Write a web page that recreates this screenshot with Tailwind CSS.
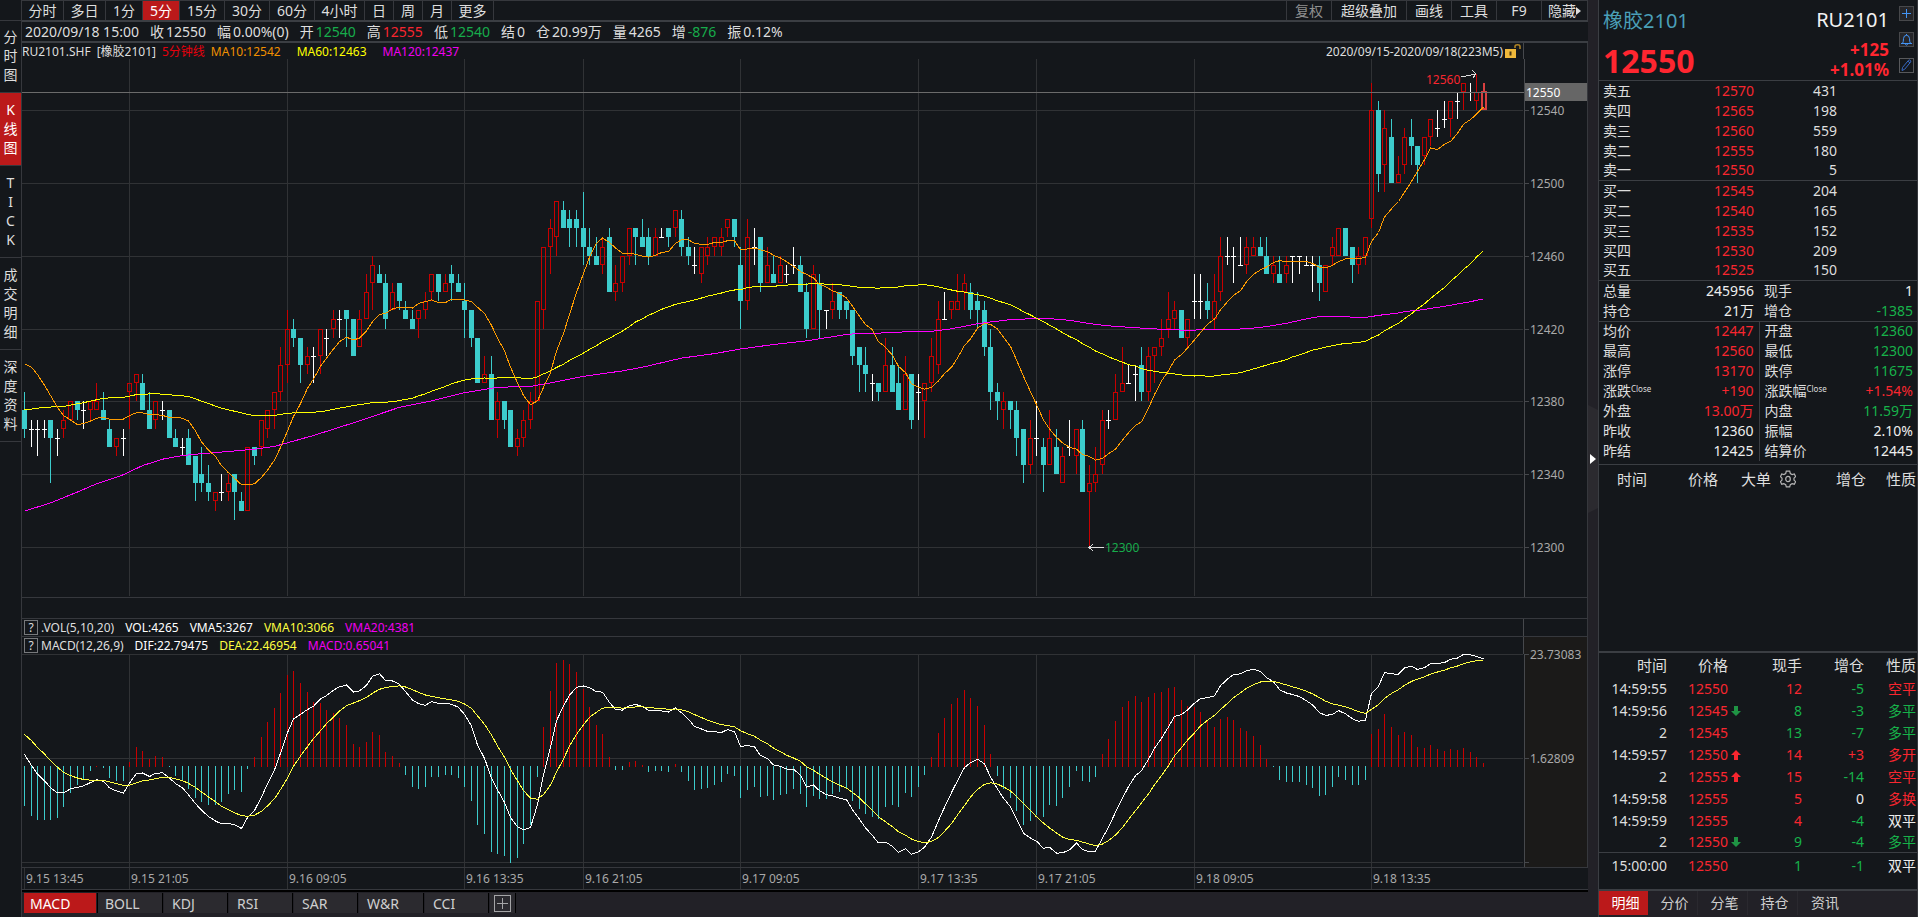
<!DOCTYPE html>
<html lang="zh-CN">
<head>
<meta charset="utf-8">
<title>橡胶2101 RU2101</title>
<script src="https://cdn.jsdelivr.net/npm/@tailwindcss/browser@4"></script>
</head>
<body class="flex h-screen overflow-hidden bg-[#14171b] font-['Noto_Sans','Noto_Sans_CJK_SC',sans-serif] text-sm leading-5 text-[#dedede]">

<!-- view switcher -->
<nav class="flex w-[22px] shrink-0 flex-col border-r border-[#36383d] text-center text-sm leading-[19px]" aria-label="视图">
  <div class="h-[21px] border-b border-[#36383d]"></div>
  <button class="border-b border-[#36383d] px-[3px] pt-[6px] pb-2 break-all">分时图</button>
  <button class="border-b border-[#36383d] bg-[#bb191a] px-[3px] pt-[7px] pb-2 break-all text-white">K线图</button>
  <button class="flex flex-col items-center border-b border-[#36383d] pt-[7px] pb-2"><span>T</span><span>I</span><span>C</span><span>K</span></button>
  <button class="border-b border-[#36383d] px-[3px] pt-[7px] pb-2 break-all">成交明细</button>
  <button class="border-b border-[#36383d] px-[3px] pt-[7px] pb-2 break-all">深度资料</button>
</nav>

<main class="flex min-w-0 flex-1 flex-col">
  <!-- period toolbar -->
  <div class="flex h-[22px] shrink-0 border-t border-b-2 border-t-[#36383d] border-b-[#3b3e43] leading-[19px] whitespace-nowrap">
    <button class="w-[42px] border-r border-[#36383d]">分时</button>
    <button class="w-[42px] border-r border-[#36383d]">多日</button>
    <button class="w-[37px] border-r border-[#36383d]">1分</button>
    <button class="w-[37px] border-r border-[#36383d] bg-[#bb191a] text-white">5分</button>
    <button class="w-[45px] border-r border-[#36383d]">15分</button>
    <button class="w-[45px] border-r border-[#36383d]">30分</button>
    <button class="w-[45px] border-r border-[#36383d]">60分</button>
    <button class="w-[50px] border-r border-[#36383d]">4小时</button>
    <button class="w-[29px] border-r border-[#36383d]">日</button>
    <button class="w-[29px] border-r border-[#36383d]">周</button>
    <button class="w-[29px] border-r border-[#36383d]">月</button>
    <button class="w-[42px] border-r border-[#36383d]">更多</button>
    <div class="flex-1"></div>
    <button class="w-[46px] border-x border-[#36383d] text-[#8f8f8f]">复权</button>
    <button class="w-[75px] border-r border-[#36383d]">超级叠加</button>
    <button class="w-[45px] border-r border-[#36383d]">画线</button>
    <button class="w-[45px] border-r border-[#36383d]">工具</button>
    <button class="w-[45px] border-r border-[#36383d]">F9</button>
    <button class="flex w-[46px] items-center justify-center border-r border-[#36383d]">隐藏<svg class="h-2 w-[5px]" viewBox="0 0 5 8"><path d="M0 0L5 4L0 8Z" fill="#dedede"/></svg></button>
  </div>

  <!-- bar quote line -->
  <div class="flex h-[21px] shrink-0 items-center gap-[11px] border-b-2 border-[#3b3e43] pl-[3px] whitespace-nowrap">
    <span>2020/09/18 15:00</span>
    <span class="flex gap-0.5">收<b class="font-normal">12550</b></span>
    <span class="flex gap-0.5">幅<b class="font-normal">0.00%(0)</b></span>
    <span class="flex gap-0.5">开<b class="font-normal text-[#17ac4b]">12540</b></span>
    <span class="flex gap-0.5">高<b class="font-normal text-[#f8262f]">12555</b></span>
    <span class="flex gap-0.5">低<b class="font-normal text-[#17ac4b]">12540</b></span>
    <span class="flex gap-0.5">结<b class="font-normal">0</b></span>
    <span class="flex gap-0.5">仓<b class="font-normal">20.99万</b></span>
    <span class="flex gap-0.5">量<b class="font-normal">4265</b></span>
    <span class="flex gap-0.5">增<b class="font-normal text-[#17ac4b]">-876</b></span>
    <span class="flex gap-0.5">振<b class="font-normal">0.12%</b></span>
  </div>

  <!-- main chart legend -->
  <div class="flex h-4 shrink-0 border-r border-[#36383d] text-xs leading-[18px] whitespace-nowrap">
    <div class="flex flex-1 border-r border-[#46484c]">
      <span>RU2101.SHF</span>
      <span class="ml-[6px]">[橡胶2101]</span>
      <span class="ml-[6px] text-[#e6000c]">5分钟线</span>
      <span class="ml-[6px] text-[#f09000]">MA10:12542</span>
      <span class="ml-4 text-[#ffff00]">MA60:12463</span>
      <span class="ml-4 text-[#f000f0]">MA120:12437</span>
      <span class="ml-auto">2020/09/15-2020/09/18(223M5)</span>
      <svg class="mt-px mr-0.5 ml-0.5 h-[15px] w-4" viewBox="0 0 16 15"><path d="M0 5h11v9H0z" fill="#efb83b"/><path d="M4.500 7.500h2v4h-2z" fill="#4a3814"/><path d="M10 4V2.500Q10 .8 12.500 .8T15 2.500V5" fill="none" stroke="#b08424" stroke-width="1.500"/></svg>
    </div>
    <div class="w-[63px]"></div>
  </div>
  <div class="relative min-h-0 flex-[538] border-r border-b border-[#36383d]"><svg id="price" class="absolute inset-0 h-full w-full" role="img" aria-label="5分钟K线"></svg></div>
  <div class="h-[21px] shrink-0 border-r border-b border-[#36383d]"></div>

  <!-- indicator legends -->
  <div class="flex h-[18px] shrink-0 border-r border-b border-[#36383d] text-xs leading-[18px] whitespace-nowrap">
    <div class="flex flex-1 gap-[11px] border-r border-[#46484c] pl-0.5">
      <span class="flex gap-[3px]"><button class="mt-px h-[15px] w-[14px] border border-[#77797c] text-xs leading-[13px]">?</button>.VOL(5,10,20)</span>
      <span class="text-white">VOL:4265</span><span class="text-white">VMA5:3267</span><span class="text-[#ffff40]">VMA10:3066</span><span class="text-[#f000f0]">VMA20:4381</span>
    </div>
    <div class="w-[63px]"></div>
  </div>
  <div class="flex h-[17px] shrink-0 border-r border-[#36383d] text-xs leading-[18px] whitespace-nowrap">
    <div class="flex flex-1 gap-[11px] border-r border-[#46484c] pl-0.5">
      <span class="flex gap-[3px]"><button class="mt-px h-[15px] w-[14px] border border-[#77797c] text-xs leading-[13px]">?</button>MACD(12,26,9)</span>
      <span class="text-white">DIF:22.79475</span><span class="text-[#ffff40]">DEA:22.46954</span><span class="text-[#f000f0]">MACD:0.65041</span>
    </div>
    <div class="w-[63px] bg-[#1b1a19]"></div>
  </div>
  <div class="relative min-h-0 flex-[213] border-r border-b border-[#36383d]"><svg id="macd" class="absolute inset-0 h-full w-full overflow-visible" role="img" aria-label="MACD"></svg></div>
  <div class="relative h-[22px] shrink-0 border-b border-[#36383d]"><svg id="times" class="absolute inset-0 h-full w-full" role="img" aria-label="时间轴"></svg></div>

  <!-- indicator tabs -->
  <div class="flex h-[27px] shrink-0 gap-px border-t-2 border-black bg-[#222127] pt-px pb-1 pl-0.5 leading-[21px] text-[#cfcfcf]">
    <button class="w-[72px] bg-[#bb191a] pl-[6px] text-left text-white">MACD</button>
    <button class="w-[66px] border-x border-black bg-[#2b2a2f] pl-[7px] text-left">BOLL</button>
    <button class="w-[64px] border-r border-black bg-[#2b2a2f] pl-2 text-left">KDJ</button>
    <button class="w-[64px] border-r border-black bg-[#2b2a2f] pl-2 text-left">RSI</button>
    <button class="w-[64px] border-r border-black bg-[#2b2a2f] pl-2 text-left">SAR</button>
    <button class="w-[65px] border-r border-black bg-[#2b2a2f] pl-2 text-left">W&amp;R</button>
    <button class="w-[64px] border-r border-black bg-[#2b2a2f] pl-2 text-left">CCI</button>
    <button class="flex w-[26px] items-center justify-center border-r border-black bg-[#2b2a2f]" aria-label="添加指标"><svg class="h-[17px] w-[17px]" viewBox="0 0 17 17" fill="none" stroke="#a5a5a7" shape-rendering="crispEdges"><path d="M.5.5h16v16H.5zM3 8.500h11M8.500 3v11"/></svg></button>
  </div>
</main>

<!-- panel collapse handle -->
<button class="flex w-[11px] shrink-0 items-center border-r border-[#3b3e43] bg-[#222127]" aria-label="收起"><svg class="h-[108px] w-[10px]" viewBox="0 0 10 108"><path d="M0 0L10 5V103L0 108Z" fill="#2b2a2f"/><path d="M2 49L8 54L2 59Z" fill="#fff"/></svg></button>

<aside class="flex w-[319px] shrink-0 flex-col border-r border-[#36383d]">
  <header class="flex h-20 shrink-0 justify-between pr-[3px] pl-1">
    <div>
      <h1 class="pt-[7px] text-xl leading-7 text-[#4a9fb8]">橡胶2101</h1>
      <p class="text-[32px] leading-[52px] font-bold text-[#ff2630]">12550</p>
    </div>
    <div class="flex gap-[10px]">
      <div class="text-right">
        <p class="pt-[6px] text-xl leading-7 text-[#f2f2f2]">RU2101</p>
        <p class="mt-[6px] text-[17px] leading-5 font-bold text-[#ff2630]">+125</p>
        <p class="text-[17px] leading-5 font-bold text-[#ff2630]">+1.01%</p>
      </div>
      <div class="flex flex-col gap-[11px] pt-[6px]">
        <button class="h-[15px] w-[15px] border border-[#47484b] bg-[#26262a]" aria-label="添加自选"><svg class="h-[13px] w-[13px]" viewBox="0 0 13 13" stroke="#4394f5" stroke-width="1" shape-rendering="crispEdges"><path d="M2 6.500h9M6.500 2v9"/></svg></button>
        <button class="h-[15px] w-[15px] border border-[#47484b] bg-[#26262a]" aria-label="预警"><svg class="h-[13px] w-[13px]" viewBox="0 0 13 13" fill="none" stroke="#4394f5"><path d="M1 10.500h11M2.500 10.500Q3.500 9 3.500 5.500Q3.800 2.300 6.500 2.300T9.500 5.500Q9.500 9 10.500 10.500M6.500 2.300V1M5.200 11.200Q6.500 13 7.800 11.200"/></svg></button>
        <button class="h-[15px] w-[15px] border border-[#58595c]" aria-label="画线下单"><svg class="h-[13px] w-[13px]" viewBox="0 0 13 13" fill="none" stroke="#3769c4"><path d="M2 11.500L2.500 8.500L8.500 1.300Q9.500.6 10.300 1.300Q11.300 2 10.500 3.200L4.600 10.300ZM8 2.200L10 4"/></svg></button>
      </div>
    </div>
  </header>

  <table class="w-full shrink-0 table-fixed border-collapse border-t border-[#3b3e43] text-right leading-[18px]">
    <colgroup><col class="w-[52px]"><col class="w-[103px]"><col class="w-[83px]"><col></colgroup>
    <tbody id="book"></tbody>
  </table>

  <table class="w-full shrink-0 table-fixed border-collapse text-right leading-[18px]">
    <colgroup><col class="w-[68px]"><col class="w-[92px]"><col class="w-[76px]"><col></colgroup>
    <tbody id="stats"></tbody>
  </table>

  <!-- large order columns -->
  <div class="mt-[3px] flex h-7 shrink-0 items-center border-t border-[#3b3e43] text-[15px]">
    <span class="w-12 text-right">时间</span><span class="w-[71px] text-right">价格</span><span class="w-[53px] text-right">大单</span>
    <button class="ml-[9px]" aria-label="设置"><svg class="block h-[18px] w-4" viewBox="0 0 16 18" fill="none" stroke="#b5b5b5" stroke-width="1.200"><path d="M6.300 1.200h3.400l.6 2.300 1.800 1 2.200-.6 1.300 2.700-1.600 1.600v1.900l1.600 1.600-1.300 2.500-2.200-.5-1.800 1-.6 2.200H6.300l-.6-2.200-1.800-1-2.200.5L.5 11.700l1.500-1.600V8.200L.5 6.600 1.700 3.900l2.200.6 1.800-1z"/><ellipse cx="8" cy="9" rx="2.300" ry="2.700"/></svg></button>
    <span class="ml-auto">增仓</span><span class="mr-px ml-5">性质</span>
  </div>
  <div class="min-h-0 flex-1"></div>

  <table class="w-full shrink-0 table-fixed border-collapse border-t-2 border-[#3b3e43] text-right">
    <colgroup><col class="w-[68px]"><col class="w-[61px]"><col class="w-4"><col class="w-[58px]"><col class="w-[62px]"><col></colgroup>
    <thead><tr class="h-[26px] text-[15px]"><th class="font-normal">时间</th><th class="font-normal">价格</th><th></th><th class="font-normal">现手</th><th class="font-normal">增仓</th><th class="pr-px font-normal">性质</th></tr></thead>
    <tbody id="ticks"></tbody>
  </table>
  <div class="mt-[9px] flex h-[28px] shrink-0 border-t-2 border-[#3b3e43] bg-[#222127] pb-0.5 leading-6 text-[#cfcfcf]">
    <button class="w-[49px] bg-[#bb191a] pl-1 text-white">明细</button>
    <button class="w-[50px] border-r border-[#2a292f] pl-1">分价</button>
    <button class="w-[50px] border-r border-[#2a292f] pl-1">分笔</button>
    <button class="w-[50px] border-r border-[#2a292f] pl-1">持仓</button>
    <button class="w-[50px] pl-1">资讯</button>
  </div>
</aside>

<script>
const RED = 'text-[#f8262f]', GREEN = 'text-[#17b24a]', WHITE = 'text-[#eeeeee]';
const tone = { r: RED, g: GREEN, w: WHITE };

// order book
const book = [['卖五',12570,431],['卖四',12565,198],['卖三',12560,559],['卖二',12555,180],['卖一',12550,5],['买一',12545,204],['买二',12540,165],['买三',12535,152],['买四',12530,209],['买五',12525,150]];
document.getElementById('book').innerHTML = book.map((b, i) =>
  `<tr class="h-5 ${i % 5 === 4 ? 'border-b border-[#3b3e43]' : ''}"><th scope="row" class="pl-1 text-left font-normal">${b[0]}</th><td class="${RED}">${b[1]}</td><td>${b[2]}</td><td></td></tr>`).join('');

// session statistics
const close = '<sup class="relative -top-1 align-baseline text-[8px] leading-none">Close</sup>';
const stats = [['总量','245956','w','现手','1','w'],['持仓','21万','w','增仓','-1385','g'],['均价','12447','r','开盘','12360','g'],['最高','12560','r','最低','12300','g'],['涨停','13170','r','跌停','11675','g'],['涨跌'+close,'+190','r','涨跌幅'+close,'+1.54%','r'],['外盘','13.00万','r','内盘','11.59万','g'],['昨收','12360','w','振幅','2.10%','w'],['昨结','12425','w','结算价','12445','w']];
document.getElementById('stats').innerHTML = stats.map((s, i) =>
  `<tr class="h-5 whitespace-nowrap ${i === 1 ? 'border-b border-[#3b3e43]' : ''}"><th scope="row" class="pl-1 text-left font-normal">${s[0]}</th><td class="pr-[5px] ${i > 1 ? 'border-r border-[#3b3e43]' : ''} ${tone[s[2]]}">${s[1]}</td><th scope="row" class="pl-[5px] text-left font-normal">${s[3]}</th><td class="pr-1 ${tone[s[5]]}">${s[4]}</td></tr>`).join('');

// time and sales
const up = '<svg class="mx-auto h-3 w-[10px]" viewBox="0 0 10 12"><path d="M5 1L10 6H7V11H3V6H0Z" fill="#f8262f"/></svg>';
const down = '<svg class="mx-auto h-3 w-[10px]" viewBox="0 0 10 12"><path d="M5 11L0 6H3V1H7V6H10Z" fill="#1f9444"/></svg>';
const ticks = [['14:59:55',12550,'',12,'r','-5','g','空平','r'],['14:59:56',12545,down,8,'g','-3','g','多平','g'],['2',12545,'',13,'g','-7','g','多平','g'],['14:59:57',12550,up,14,'r','+3','r','多开','r'],['2',12555,up,15,'r','-14','g','空平','r'],['14:59:58',12555,'',5,'r','0','w','多换','r'],['14:59:59',12555,'',4,'r','-4','g','双平','w'],['2',12550,down,9,'g','-4','g','多平','g'],['15:00:00',12550,'',1,'g','-1','g','双平','w']];
document.getElementById('ticks').innerHTML = ticks.map((t, i) =>
  `<tr class="${i === 7 ? 'h-5 border-b border-[#3b3e43]' : i === 8 ? 'h-7' : 'h-[22px]'}"><td>${t[0]}</td><td class="${RED}">${t[1]}</td><td>${t[2]}</td><td class="${tone[t[4]]}">${t[3]}</td><td class="${tone[t[6]]}">${t[5]}</td><td class="pr-px ${tone[t[8]]}">${t[7]}</td></tr>`).join('');

// 5-minute bars in ticks of 5 above 12300: colour, body top, body bottom, high, low
const raw = `c15,13,17,12 w13,13,14,11 w13,13,14,10 w13,13,14,12 c14,12,14,7 w12,12,13,10 r14,13,15,12 r16,14,16,14 c16,15,16,14 w15,15,16,13
r16,15,16,14 r16,15,18,15 c15,14,17,14 c13,11,14,11 r12,11,12,10 w12,12,13,10 r18,17,18,13 r19,18,19,16 c18,15,19,15 c15,13,17,13
r16,14,16,13 w15,15,16,14 c15,12,15,12 c12,11,13,11 w11,11,12,10 c12,9,13,9 c10,7,10,5 c8,7,11,6 c7,6,9,5 r6,5,6,4
w6,6,8,5 r7,6,8,5 c8,6,8,3 c5,4,6,4 r11,4,11,4 c11,10,11,9 r14,11,14,10 r15,13,15,12 r17,15,17,13 r20,17,22,16
r24,20,26,18 c24,23,25,22 c23,20,23,18 r21,20,22,19 w21,21,22,18 r24,21,24,19 w23,23,24,21 r25,24,26,23 w25,25,26,23 c26,25,26,22
c25,21,25,21 r25,22,26,22 r28,25,30,25 r31,29,32,26 c30,29,31,29 c29,25,30,24 r28,26,29,26 c29,27,29,26 c26,25,27,25 c25,24,26,24
r26,25,26,23 r27,26,28,25 r30,28,30,27 c30,28,30,27 r29,28,30,28 c30,29,31,27 c29,28,30,28 c27,26,29,23 c26,23,26,22 c23,18,23,18
r19,18,21,18 c19,14,21,14 r16,14,17,12 c16,14,16,13 c15,11,15,11 r12,11,13,10 r14,12,15,11 r16,14,17,13 r27,16,27,16 r33,26,33,24
r35,33,36,30 r38,34,38,32 c37,35,38,35 c36,35,37,33 c36,35,37,33 c35,33,39,31 c33,32,35,31 c32,31,34,31 r33,31,34,30 c34,28,35,28
r29,28,31,27 r32,29,32,28 r35,32,35,31 c35,34,35,31 c34,33,36,33 c34,32,35,31 r34,32,35,32 w34,34,35,34 c35,34,35,33 r37,35,37,34
c36,33,37,32 c33,32,34,31 w31,31,33,30 r33,30,33,29 r33,32,34,31 r34,33,34,32 r34,33,35,32 r36,35,36,34 c36,34,36,33 c31,27,33,24
r34,27,36,26 w33,33,35,31 c34,29,34,28 r31,29,33,29 c30,29,32,29 r31,29,32,29 w30,30,31,29 w31,31,33,30 c31,28,32,28 c28,24,29,23
r30,24,31,24 c29,26,30,23 w26,26,26,24 r27,26,29,25 c28,26,28,25 c27,26,27,25 c26,21,26,20 c22,20,22,17 c20,19,22,17 w18,18,19,16
c18,17,18,16 r20,17,23,17 c20,17,22,17 c18,15,20,15 r19,15,21,15 c19,14,19,13 w17,17,19,14 r18,16,18,12 r21,18,23,17 r25,20,27,19
w25,25,28,25 r27,26,27,25 r27,26,30,26 r29,28,30,26 c28,26,29,25 c27,26,28,24 c26,22,27,21 c22,17,24,15 c17,16,18,14 r16,15,17,13
c16,15,16,13 c15,12,16,10 c13,9,13,7 r12,9,14,8 w12,12,16,10 c11,9,12,6 r12,9,15,9 c11,8,13,8 r10,7,11,7 w11,11,14,10
r13,10,13,8 c13,6,14,6 r7,6,9,0 r8,7,11,6 r14,9,15,8 w14,14,15,13 r17,14,19,14 r18,17,22,17 w18,18,20,18 w19,19,20,16
c20,17,22,16 r21,17,22,16 r22,21,22,18 r23,22,25,21 r25,24,28,23 r26,25,27,24 c26,23,26,23 r25,23,25,22 w27,27,30,25 w27,27,30,25
c27,26,29,25 r27,25,30,24 r32,28,34,27 w32,32,34,31 w32,32,33,29 w31,31,34,31 r33,31,34,30 r33,32,34,32 c33,32,34,32 c32,30,34,30
r31,30,32,29 c30,29,32,29 r31,30,32,29 w32,32,32,29 w32,32,32,30 w31,31,32,31 w31,31,32,28 c31,29,32,27 r31,28,31,28 r33,32,34,31
r35,32,35,32 c35,32,35,32 c33,31,33,29 r32,31,33,30 r34,32,34,31 r48,36,51,35 c48,41,49,39 r46,42,48,39 c45,40,47,40 r41,40,43,40
r45,42,46,41 c45,44,47,42 c44,42,44,40 r45,43,45,42 r47,45,47,44 w46,46,48,45 w47,47,49,46 r49,47,49,45 w49,49,50,47 r51,50,51,48
w50,50,51,49 r50,49,52,48 r50,48,51,48`;
const bars = raw.trim().split(/\s+/).map(s => { const [t, b, h, l] = s.slice(1).split(',').map(Number); return { k: s[0], t, b, h, l, c: s[0] === 'c' ? b : t }; });
const N = bars.length;

// averages of bars that precede the visible window are listed as levels
const lead10 = [20.2,19.8,19,17.8,16.7,15.4,14.5,14,13.5];
const lead60 = [[0,15.1],[3,15.4],[6,15.5],[9,15.9],[12,16.4],[15,16.5],[17,16.8],[20,16.9],[25,16.6],[30,15.3],[35,14.45],[38,14.5],[40,14.75],[45,14.9],[50,15.6],[53,15.9],[56,16],[59,16.4]];
const lead120 = [[0,4],[4,4.9],[8,6.1],[11,7],[15,8],[18,9],[21,9.7],[24,10.1],[27,10.3],[32,10.6],[35,10.8],[38,11.1],[40,11.5],[44,12.3],[50,13.7],[57,15.4],[62,16.1],[67,17],[72,17.6],[77,17.7],[81,18.2],[85,18.8],[91,19.4],[94,19.8],[100,20.8],[105,21.3],[109,21.8],[114,22.3],[119,22.7]];
function sma(n) {
  const out = [];
  for (let i = n - 1; i < N; i++) { let s = 0; for (let j = i - n + 1; j <= i; j++) s += bars[j].c; out.push([i, s / n]); }
  return out;
}
const ma10 = lead10.map((v, i) => [i, v]).concat(sma(10));
const ma60 = lead60.concat(sma(60).slice(1));
const ma120 = lead120.concat(sma(120).slice(1));

// MACD(12,26,9)
let slow = 12389.5, fast = slow + 2.48, sig = 6.73;
const macd = bars.map((b, i) => {
  const c = 12300 + b.c * 5;
  if (i) { fast += (c - fast) * 2 / 13; slow += (c - slow) * 2 / 27; sig += (fast - slow - sig) * .2; }
  return { dif: fast - slow, dea: sig, bar: 2 * (fast - slow - sig) };
});

const grid = [[0,'9.15 13:45'],[16,'9.15 21:05'],[40,'9.16 09:05'],[67,'9.16 13:35'],[85,'9.16 21:05'],[109,'9.17 09:05'],[136,'9.17 13:35'],[154,'9.17 21:05'],[178,'9.18 09:05'],[205,'9.18 13:35']];
const AXIS = 64;
const rect = (x, y, w, h, f) => `<rect x="${x}" y="${y}" width="${w}" height="${h}" fill="${f}"/>`;
const text = (x, y, s, f, z = 12) => `<text x="${x}" y="${y}" fill="${f}" font-size="${z}">${s}</text>`;
const line = (pts, f) => `<polyline fill="none" stroke="${f}" points="${pts.map(p => p.map(v => v.toFixed(1)).join()).join(' ')}"/>`;
const price = document.getElementById('price'), mc = document.getElementById('macd'), tm = document.getElementById('times');

function draw() {
  const W = price.parentElement.clientWidth - AXIS + 1, H = price.parentElement.clientHeight;
  const X = i => Math.round(2 + i * (W - 43) / (N - 1));

  const y = v => (51.5 + (48 - v) * 437 / 48) * H / 538;
  const Y = v => Math.floor(y(v));
  let s = '';
  for (const [i] of grid) if (i) s += rect(X(i), 0, 1, H - 1, '#303235');
  for (let v = 0; v <= 48; v += 8) s += rect(0, Y(v), W - 1, 1, '#303235') + rect(W, Y(v), 5, 1, '#46484c') + text(W + 6, Y(v) + 5, 12300 + v * 5, '#a9a9a9');
  s += rect(W, 0, 1, H, '#46484c');
  bars.forEach((b, i) => {
    const x = X(i), t = Y(b.t), bt = Y(b.b), h = Y(b.h), l = Y(b.l);
    if (i === N - 1) {
      s += rect(x, h, 2, t - h, '#d94040') + `<rect x="${x - 1}" y="${t}" width="4" height="${bt - t - 1}" fill="none" stroke="#d94040" stroke-width="2"/>`;
    } else if (b.k === 'r') {
      s += rect(x, h, 1, t - h, '#c80000') + rect(x, bt, 1, l - bt, '#c80000');
      s += `<rect x="${x - 1.5}" y="${t + .5}" width="4" height="${bt - t - 1}" fill="none" stroke="#c80000"/>`;
    } else if (b.k === 'c') {
      s += rect(x, h, 1, l - h, '#3ccccc') + rect(x - 2, t, 5, bt - t, '#3ccccc');
    } else {
      s += rect(x, h, 1, Math.max(1, l - h), '#fff') + rect(x - 2, t, 5, 1, '#fff');
    }
  });
  const path = a => a.map(([i, v]) => [X(i) + .5, y(v)]);
  s += line(path(ma120), '#ff00ff') + line(path(ma60), '#ffff00') + line(path(ma10), '#ff9c00');
  s += rect(0, Y(50), W, 1, '#6b6b6b') + rect(W + 1, Y(50) - 9, AXIS - 2, 18, '#666666') + text(W + 2, Y(50) + 5, '12550', '#fff');
  const hi = [X(221), Y(52)], lo = [X(162), Y(0)];
  s += text(hi[0] - 50, hi[1] + 10, '12560', '#f8262f') + `<path d="M${hi[0] - 15} ${hi[1] + 3}L${hi[0]} ${hi[1]}M${hi[0] - 4} ${hi[1] - 4}L${hi[0]} ${hi[1]}L${hi[0] - 3} ${hi[1] + 4}" fill="none" stroke="#ddd"/>`;
  s += text(lo[0] + 16, lo[1] + 5, '12300', '#17ac4b') + `<path d="M${lo[0]} ${lo[1] + .5}H${lo[0] + 15}M${lo[0] + 4} ${lo[1] - 3}L${lo[0]} ${lo[1] + .5}L${lo[0] + 4} ${lo[1] + 4}" fill="none" stroke="#ddd"/>`;
  price.innerHTML = `<g shape-rendering="crispEdges">${s}</g>`;

  const h = mc.parentElement.clientHeight, k = 104 / 22.10274 * h / 213, z = .5 + 23.73083 * k;
  const my = v => z - v * k;
  s = rect(W + 1, 0, AXIS - 2, h, '#1b1a19');
  for (const [i] of grid) if (i) s += rect(X(i), 0, 1, h, '#303235');
  [[23.73083, 1], [1.62809, 1], [-20.47465, 0]].forEach(([v, label]) => {
    const q = Math.floor(my(v) + .01);
    s += rect(0, q, W - 1, 1, '#303235') + rect(W, q, 5, 1, '#46484c');
    if (label) s += text(W + 6, q + 5, v, '#a9a9a9');
  });
  s += rect(W, 0, 1, h, '#46484c');
  macd.forEach((m, i) => {
    const q = Math.round(my(m.bar)), o = Math.round(z);
    s += m.bar > 0 ? rect(X(i), q, 1, o - q + 1, '#c80000') : rect(X(i), o, 1, Math.max(1, q - o), '#3ccccc');
  });
  s += line(macd.map((m, i) => [X(i) + .5, my(m.dif)]), '#fff') + line(macd.map((m, i) => [X(i) + .5, my(m.dea)]), '#ffff40');
  mc.innerHTML = `<g shape-rendering="crispEdges">${s}</g>`;

  tm.innerHTML = grid.map(([i, d]) => rect(X(i), 0, 1, 21, '#303235') + text(X(i) + 2, 15, d, '#a9a9a9')).join('');
}
const watcher = new ResizeObserver(draw);
watcher.observe(price.parentElement);
watcher.observe(mc.parentElement);
</script>
</body>
</html>
